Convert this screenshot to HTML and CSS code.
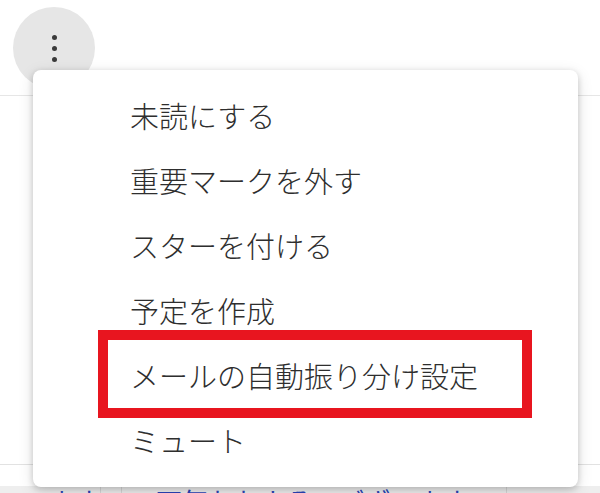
FILE: index.html
```html
<!DOCTYPE html>
<html lang="ja">
<head>
    <meta charset="UTF-8">
    <meta name="viewport" content="width=device-width, initial-scale=1.0">
    <title>メニュー</title>
    <link rel="stylesheet" href="styles.css">
</head>
<body>
    <div class="toolbar">
        <button class="more-button" aria-label="その他">
            <span class="dot"></span>
            <span class="dot"></span>
            <span class="dot"></span>
        </button>
    </div>
    <div class="mail-list">
        <div class="mail-row"></div>
        <div class="mail-row mail-row-grey">
            <span class="cell cell-a">ます</span>
            <span class="cell cell-b"></span>
            <span class="cell cell-c">天気おおよそ・ございます</span>
        </div>
    </div>

    <div class="menu">
        <div class="menu-item">未読にする</div>
        <div class="menu-item">重要マークを外す</div>
        <div class="menu-item">スターを付ける</div>
        <div class="menu-item">予定を作成</div>
        <div class="menu-item highlighted">メールの自動振り分け設定</div>
        <div class="menu-item">ミュート</div>
    </div>
</body>
</html>
```

FILE: styles.css
```css
html {
    height: 100%;
    overflow: hidden;
}
body {
    margin: 0;
    height: 100%;
    background-color: #ffffff;
    font-family: "Noto Sans CJK JP", "Noto Sans", sans-serif;
    color: #333333;
    overflow: hidden;
}
.toolbar {
    height: 96px;
    border-bottom: 1px solid #e6e6e6;
    padding: 7px 0 0 13px;
    box-sizing: border-box;
}
.more-button {
    width: 82px;
    height: 82px;
    border-radius: 50%;
    border: none;
    background-color: #e6e6e6;
    display: flex;
    flex-direction: column;
    align-items: center;
    justify-content: center;
    gap: 6px;
    padding: 0;
}
.dot {
    width: 5px;
    height: 5px;
    border-radius: 50%;
    background-color: #3a3a3a;
}
.mail-row {
    height: 368px;
    border-bottom: 1px solid #e2e2e2;
}
.mail-row-grey {
    height: 30px;
    margin-top: 21px;
    background-color: #eeeeee;
    border-bottom: none;
    display: flex;
    font-size: 26px;
    color: #2a44b8;
    line-height: 30px;
}
.cell {
    border-right: 1px solid #d6d6d6;
}
.cell-a {
    width: 100px;
    text-align: right;
    overflow: hidden;
    white-space: nowrap;
}
.cell-b {
    width: 20px;
}
.cell-c {
    width: 350px;
    padding-left: 34px;
    white-space: nowrap;
    overflow: hidden;
}
.menu {
    position: absolute;
    left: 33px;
    top: 70px;
    width: 545px;
    padding: 13px 0 14px 0;
    background-color: #ffffff;
    border-radius: 8px;
    box-shadow: 0 2px 6px rgba(0, 0, 0, 0.18), 0 4px 16px rgba(0, 0, 0, 0.12);
}
.menu-item {
    position: relative;
    height: 65px;
    line-height: 65px;
    padding-left: 97px;
    font-size: 29px;
    font-weight: 300;
    color: #2e2e2e;
    white-space: nowrap;
}
.highlighted::before {
    content: "";
    position: absolute;
    left: 65px;
    top: -13px;
    bottom: -10px;
    width: 414px;
    border: 10px solid #e8151f;
}
```
